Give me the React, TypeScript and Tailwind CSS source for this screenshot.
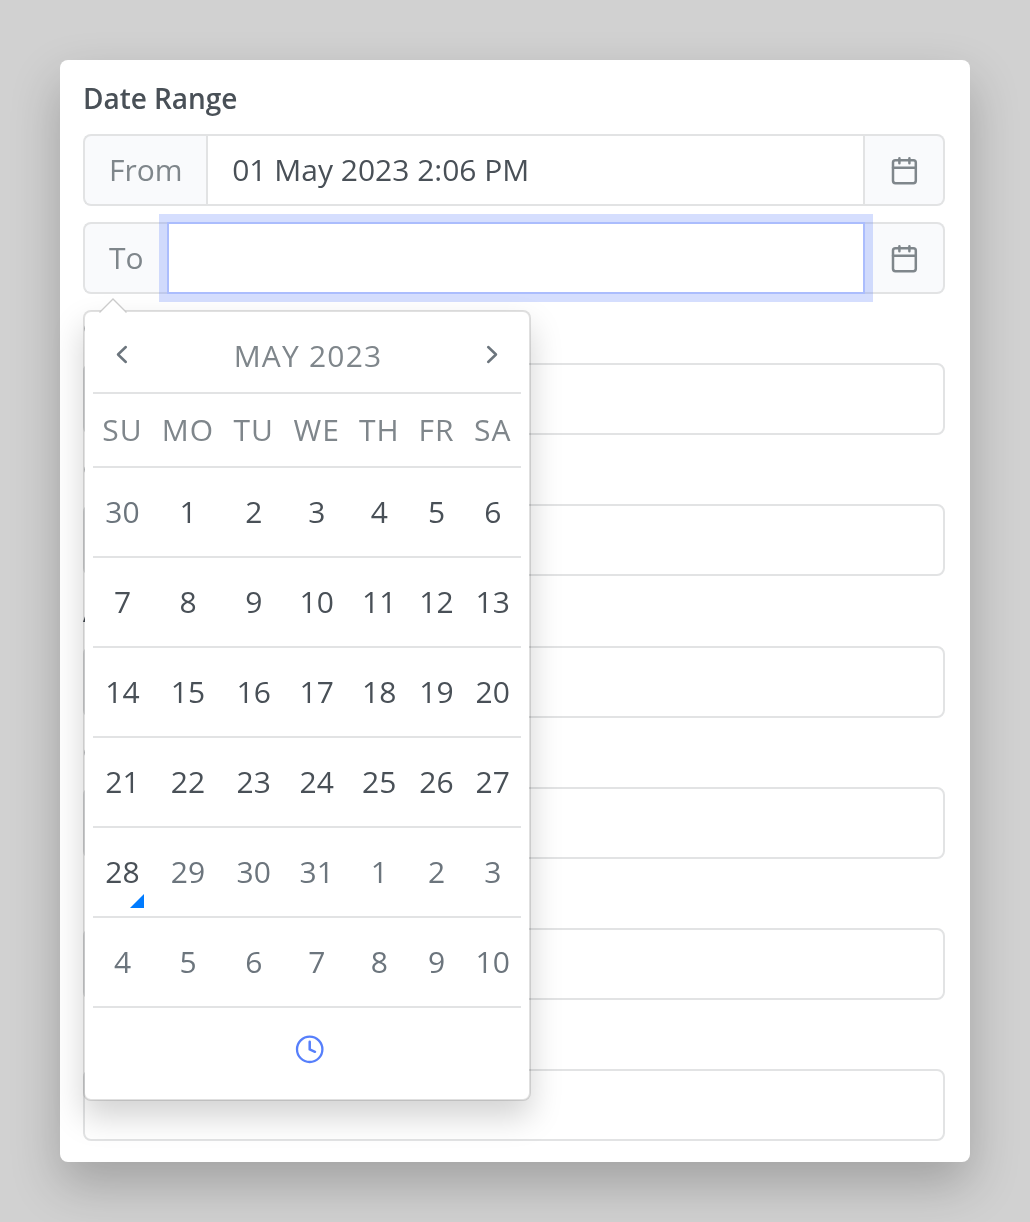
import { useState } from 'react';
import clsx from 'clsx';

interface Day {
  day: number;
  muted?: boolean;
  today?: boolean;
}

const WEEKDAYS = ['SU', 'MO', 'TU', 'WE', 'TH', 'FR', 'SA'];

// fields below the date range
const FIELDS = ['C', 'C', 'A', 'C', '', ''];

function buildDays(): Day[] {
  const days: Day[] = [{ day: 30, muted: true }];
  for (let d = 1; d <= 31; d++) {
    days.push({ day: d, muted: d > 28, today: d === 28 });
  }
  for (let d = 1; d <= 10; d++) {
    days.push({ day: d, muted: true });
  }
  return days;
}

function CalendarIcon() {
  return (
    <svg className="w-8 h-8" viewBox="0 0 32 32" fill="none" stroke="currentColor" strokeWidth="2.5" strokeLinecap="round">
      <rect x="5" y="6.2" width="22.8" height="23" rx="2.4" />
      <path d="M5 13.8h22.8M11.4 4.2v5M21.4 4.2v5" />
    </svg>
  );
}

function ClockIcon() {
  return (
    <svg className="w-8 h-8" viewBox="0 0 32 32" fill="none" stroke="currentColor" strokeWidth="2.3" strokeLinecap="round" strokeLinejoin="round">
      <circle cx="15.7" cy="16.3" r="12.7" />
      <path d="M15.7 8.8v7.6l5.3 2.4" strokeWidth="2.5" />
    </svg>
  );
}

function Chevron({ direction }: { direction: 'left' | 'right' }) {
  return (
    <svg className="w-6 h-6" viewBox="0 0 24 24" fill="none" stroke="currentColor" strokeWidth="2.5" strokeLinecap="round" strokeLinejoin="round">
      <path d={direction === 'left' ? 'M15.8 5 8 12.5 15.8 20' : 'M8.2 5 16 12.5 8.2 20'} />
    </svg>
  );
}

interface DateInputProps {
  label: string;
  value: string;
  focused?: boolean;
  onChange: (value: string) => void;
}

function DateInput({ label, value, focused, onChange }: DateInputProps) {
  return (
    <div className="flex h-[72px]">
      <span className="flex items-center rounded-l-lg border-2 border-r-0 border-[#e2e3e4] bg-[#f9fafc] pb-0.5 pl-6 pr-[23px] text-[#7f868b]">
        {label}
      </span>
      <input
        type="text"
        value={value}
        onChange={(e) => onChange(e.target.value)}
        className={clsx(
          'min-w-0 flex-1 border-2 bg-white pb-0.5 pl-[24.6px] pr-6 outline-none',
          focused ? 'relative border-[#abbdfd] shadow-[0_0_0_8px_rgba(87,123,251,0.25)]' : 'border-[#e2e3e4]'
        )}
      />
      <span className="flex w-[80px] items-center justify-center rounded-r-lg border-2 border-l-0 border-[#e2e3e4] bg-[#f9fafc] text-[#7f868b]">
        <CalendarIcon />
      </span>
    </div>
  );
}

function DatePicker() {
  return (
    <div className="absolute left-0 top-[176px] w-[448px] rounded-lg border-2 border-black/12 bg-white bg-clip-padding px-2 shadow-[0_16px_32px_rgba(0,0,0,0.175)]">
      <svg className="absolute left-[14px] top-[-14px] h-[15px] w-7" viewBox="0 0 28 15">
        <path d="M0 15 14 1 28 15z" fill="#fff" />
        <path d="M0.5 14.5 14 1 27.5 14.5" fill="none" stroke="#cbcbcb" strokeWidth="1.4" />
      </svg>
      <div className="flex h-[82px] items-center justify-between border-b-2 border-[#e2e3e4] px-[17px] pt-1">
        <button className="text-[#6c757d]"><Chevron direction="left" /></button>
        <span className="pl-0.5 pt-0.5 tracking-[1.2px] text-[#7f868b]">MAY 2023</span>
        <button className="text-[#6c757d]"><Chevron direction="right" /></button>
      </div>
      <div className="grid grid-cols-[59px_72px_59.5px_66.5px_58.5px_56px_56.5px]">
        {WEEKDAYS.map(name => (
          <div key={name} className="flex h-[74px] items-center justify-center border-b-2 border-[#e2e3e4] pb-0.5 tracking-[1px] text-[#7f868b]">
            {name}
          </div>
        ))}
        {buildDays().map((d, i) => (
          <div
            key={i}
            className={clsx(
              'relative flex h-[90px] items-center justify-center border-b-2 border-[#e2e3e4] pb-0.5',
              d.muted ? 'text-[#6c757d]' : 'text-[#495057]'
            )}
          >
            {d.day}
            {d.today && (
              <span className="absolute bottom-2 right-2 h-[14px] w-[14px] bg-[#007bff] [clip-path:polygon(100%_0,100%_100%,0_100%)]" />
            )}
          </div>
        ))}
      </div>
      <div className="flex h-[91px] items-start justify-center pl-[5px] pt-[25px] text-[#567ffb]">
        <ClockIcon />
      </div>
    </div>
  );
}

export default function App() {
  const [from, setFrom] = useState('01 May 2023 2:06 PM');
  const [to, setTo] = useState('');

  return (
    <div className="h-[1222px] w-[1030px] overflow-hidden bg-[#d1d1d1] p-[60px] font-['Open_Sans',sans-serif] text-[30px] leading-[45px] text-[#495057]">
      <div className="h-[1102px] rounded-lg bg-white pl-[23px] pr-[25px] pt-[17px] shadow-[0_22px_50px_rgba(0,0,0,0.23)] will-change-transform">
        <h2 className="h-[57px] text-[28px] font-semibold leading-[42px] tracking-[-0.05px]">Date Range</h2>
        <div className="relative">
          <div className="flex flex-col gap-4">
            <DateInput label="From" value={from} onChange={setFrom} />
            <DateInput label="To" value={to} onChange={setTo} focused />
          </div>
          <DatePicker />
        </div>
        {FIELDS.map((label, i) => (
          <div key={i} className="h-[141.25px] pt-[13px]">
            <div className="h-14 text-[28px] font-semibold leading-[42px]">{label}</div>
            <div className="h-[72px] rounded-lg border-2 border-[#e2e3e4] bg-white" />
          </div>
        ))}
      </div>
    </div>
  );
}
